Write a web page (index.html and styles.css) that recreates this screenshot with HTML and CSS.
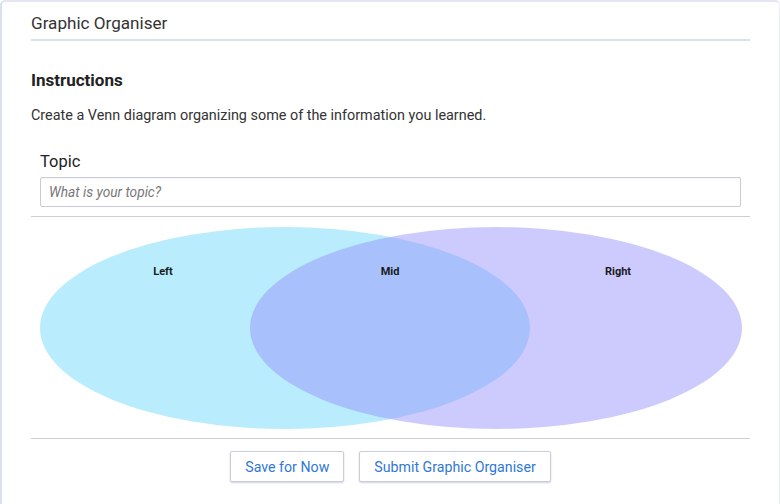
FILE: index.html
```html
<!DOCTYPE html>
<html>
<head>
<meta charset="utf-8">
<link rel="stylesheet" href="styles.css">
</head>
<body>
<div class="card">
  <div class="title">Graphic Organiser</div>
  <h2 class="instr-title">Instructions</h2>
  <p class="instr">Create a Venn diagram organizing some of the information you learned.</p>
  <div class="topic">
    <label class="topic-label">Topic</label>
    <input class="topic-input" type="text" placeholder="What is your topic?">
  </div>
  <div class="venn">
    <svg width="719" height="221" viewBox="0 0 719 221">
      <ellipse cx="254" cy="111" rx="245" ry="101" fill="#b9ecfd"/>
      <ellipse cx="465" cy="111" rx="246" ry="101" fill="#9591fd" fill-opacity="0.47"/>
      <text x="132" y="58" class="vlabel" text-anchor="middle">Left</text>
      <text x="359" y="58" class="vlabel" text-anchor="middle">Mid</text>
      <text x="587" y="58" class="vlabel" text-anchor="middle">Right</text>
    </svg>
  </div>
  <div class="actions">
    <button class="btn">Save for Now</button>
    <button class="btn">Submit Graphic Organiser</button>
  </div>
</div>
</body>
</html>
```
FILE: styles.css
```css
html, body {
  margin: 0;
  padding: 0;
  background: #ffffff;
  font-family: Roboto, "Liberation Sans", Arial, sans-serif;
}
.card {
  width: 719px;
  height: 520px;
  margin: 0;
  padding: 0 29px 0 29px;
  border-left: 2px solid #dcdfef;
  border-top: 2px solid #e3e5f2;
  border-right: 1px solid #eceef6;
  border-radius: 5px 5px 0 0;
  background: #fff;
}
.title {
  font-size: 17.1px;
  line-height: 20px;
  color: #333;
  padding-top: 11px;
  padding-bottom: 6px;
  border-bottom: 2px solid #dcdfee;
}
.instr-title {
  margin: 29px 0 0;
  font-size: 17px;
  line-height: 20px;
  font-weight: 700;
  color: #222;
}
.instr {
  margin: 17px 0 0;
  font-size: 14.4px;
  line-height: 18px;
  color: #333;
}
.topic {
  display: flex;
  flex-direction: column;
  padding: 0 9px 9px;
  margin-top: 27px;
  border-bottom: 1px solid #cfcfcf;
}
.topic-label {
  font-size: 16.5px;
  line-height: 20px;
  color: #222;
}
.topic-input {
  margin-top: 5px;
  height: 30px;
  box-sizing: border-box;
  border: 1px solid #c9ccd8;
  border-radius: 2px;
  padding: 0 8px;
  font-family: Roboto, "Liberation Sans", Arial, sans-serif;
  font-size: 13.7px;
  color: #333;
  outline: none;
  box-shadow: inset 0 1px 1px rgba(0,0,0,0.04);
}
.topic-input::placeholder {
  font-style: italic;
  color: #777;
}
.venn {
  height: 221px;
  border-bottom: 1px solid #cfcfcf;
}
.venn svg {
  display: block;
}
.vlabel {
  font-family: Roboto, "Liberation Sans", Arial, sans-serif;
  font-size: 11px;
  font-weight: 700;
  fill: #1a1a1a;
}
.actions {
  display: flex;
  justify-content: center;
  gap: 15px;
  margin-top: 12px;
}
.btn {
  height: 31px;
  padding: 0 14px;
  background: #fff;
  border: 1px solid #c8cde0;
  border-radius: 2px;
  box-shadow: 0 1px 2px rgba(0,0,0,0.18);
  font-family: Roboto, "Liberation Sans", Arial, sans-serif;
  font-size: 14.2px;
  color: #2f78d6;
  cursor: pointer;
}
```
